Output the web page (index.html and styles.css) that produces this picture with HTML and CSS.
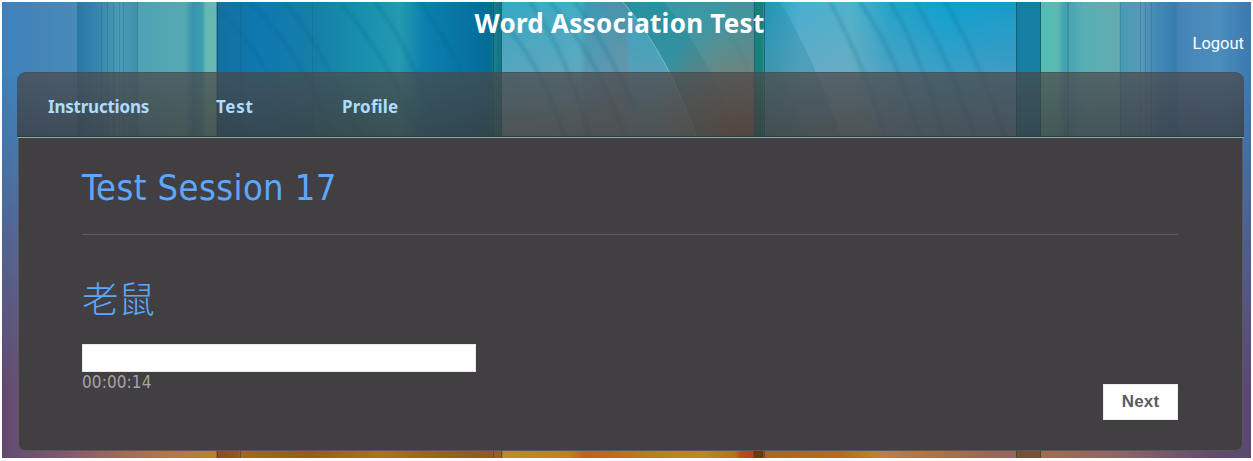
FILE: index.html
```html
<!DOCTYPE html>
<html lang="en">
<head>
<meta charset="utf-8">
<title>Word Association Test</title>
<link rel="stylesheet" href="styles.css">
</head>
<body>
<div class="page">
  <svg class="backdrop" viewBox="2 2 1249 456" preserveAspectRatio="none" aria-hidden="true">
    <defs>
      <linearGradient id="sky" gradientUnits="userSpaceOnUse" x1="0" x2="1000" y1="0" y2="0">
        <stop offset=".002" stop-color="#3c82bd"/><stop offset=".04" stop-color="#4585b9"/><stop offset=".077" stop-color="#478bb8"/>
        <stop offset=".077" stop-color="#2877a8"/><stop offset=".098" stop-color="#3786ae"/><stop offset=".12" stop-color="#489bb4"/>
        <stop offset=".137" stop-color="#3e91ac"/><stop offset=".139" stop-color="#4ca3b4"/><stop offset=".185" stop-color="#55a9b2"/>
        <stop offset=".193" stop-color="#3594ac"/><stop offset=".202" stop-color="#3c9eae"/><stop offset=".206" stop-color="#67b8b2"/>
        <stop offset=".216" stop-color="#67b8b2"/><stop offset=".217" stop-color="#1470a1"/><stop offset=".26" stop-color="#0e78b2"/>
        <stop offset=".31" stop-color="#147ea8"/><stop offset=".36" stop-color="#178fad"/><stop offset=".4" stop-color="#2499b0"/>
        <stop offset=".425" stop-color="#0b7fae"/><stop offset=".48" stop-color="#046f9e"/><stop offset=".492" stop-color="#056c91"/>
        <stop offset=".493" stop-color="#147f91"/><stop offset=".501" stop-color="#127483"/><stop offset=".502" stop-color="#35a8c4"/>
        <stop offset=".58" stop-color="#42adc3"/><stop offset=".586" stop-color="#3a9ab3"/><stop offset=".626" stop-color="#4993aa"/>
        <stop offset=".63" stop-color="#38a1bd"/><stop offset=".67" stop-color="#36a3bc"/><stop offset=".72" stop-color="#4a9caf"/>
        <stop offset=".753" stop-color="#638c94"/><stop offset=".754" stop-color="#177f7f"/><stop offset=".763" stop-color="#198276"/>
        <stop offset=".764" stop-color="#209ec1"/><stop offset=".8" stop-color="#49afd0"/><stop offset=".85" stop-color="#4eb2cb"/><stop offset=".89" stop-color="#24a3ca"/>
        <stop offset=".95" stop-color="#0ea0d0"/><stop offset="1" stop-color="#169ccb"/>
      </linearGradient>
      <linearGradient id="skyRight" x1="0" x2="1" y1="0" y2="0">
        <stop offset="0" stop-color="#50beb4"/><stop offset=".08" stop-color="#5cb9b1"/><stop offset=".11" stop-color="#40a2b3"/>
        <stop offset=".2" stop-color="#57afb4"/><stop offset=".37" stop-color="#63acb1"/><stop offset=".38" stop-color="#489bb2"/>
        <stop offset=".48" stop-color="#5698b8"/><stop offset=".56" stop-color="#4088b5"/><stop offset=".64" stop-color="#367eb2"/>
        <stop offset=".66" stop-color="#4785b8"/><stop offset=".85" stop-color="#4b8dbd"/><stop offset="1" stop-color="#3b79b2"/>
      </linearGradient>
      <linearGradient id="ground" gradientUnits="userSpaceOnUse" x1="0" x2="1000" y1="0" y2="0">
        <stop offset=".002" stop-color="#614a70"/><stop offset=".07" stop-color="#825b6c"/><stop offset=".13" stop-color="#a46d57"/>
        <stop offset=".18" stop-color="#b87941"/><stop offset=".216" stop-color="#bd8027"/><stop offset=".217" stop-color="#8b4f17"/>
        <stop offset=".239" stop-color="#93581a"/><stop offset=".24" stop-color="#ab651a"/><stop offset=".31" stop-color="#985c12"/>
        <stop offset=".38" stop-color="#aa7418"/><stop offset=".44" stop-color="#966514"/><stop offset=".492" stop-color="#8f5b19"/>
        <stop offset=".493" stop-color="#a65819"/><stop offset=".502" stop-color="#a45c1a"/><stop offset=".503" stop-color="#c18a22"/>
        <stop offset=".57" stop-color="#c57d1b"/><stop offset=".585" stop-color="#c5601a"/><stop offset=".62" stop-color="#c46c18"/>
        <stop offset=".65" stop-color="#bd7d1a"/><stop offset=".7" stop-color="#bd8820"/><stop offset=".735" stop-color="#bd701a"/>
        <stop offset=".74" stop-color="#b94c1a"/><stop offset=".753" stop-color="#b84419"/><stop offset=".754" stop-color="#6b390a"/>
        <stop offset=".763" stop-color="#6b390a"/><stop offset=".764" stop-color="#b0641e"/><stop offset=".84" stop-color="#b96a1a"/>
        <stop offset=".87" stop-color="#bf8022"/><stop offset=".88" stop-color="#c67b3d"/><stop offset=".95" stop-color="#a87048"/>
        <stop offset="1" stop-color="#94665e"/>
      </linearGradient>
      <linearGradient id="groundRight" x1="0" x2="1" y1="0" y2="0">
        <stop offset="0" stop-color="#a16e50"/><stop offset=".4" stop-color="#8a6468"/><stop offset=".8" stop-color="#644c6c"/>
        <stop offset="1" stop-color="#5b4871"/>
      </linearGradient>
      <linearGradient id="fall" x1="0" x2="0" y1="0" y2="1">
        <stop offset=".16" stop-color="#fff" stop-opacity="0"/><stop offset=".3" stop-color="#fff" stop-opacity=".2"/>
        <stop offset=".55" stop-color="#fff" stop-opacity=".6"/><stop offset=".85" stop-color="#fff"/>
      </linearGradient>
      <radialGradient id="warm" cx=".8" cy="1" r=".9">
        <stop offset="0" stop-color="#b06040" stop-opacity=".75"/><stop offset="1" stop-color="#b06848" stop-opacity="0"/>
      </radialGradient>
      <linearGradient id="pale" x1="0" x2="0" y1="0" y2="1">
        <stop offset="0" stop-color="#a89cae" stop-opacity="0"/><stop offset="1" stop-color="#a89cae" stop-opacity=".55"/>
      </linearGradient>
      <mask id="fade"><rect x="2" y="2" width="1249" height="456" fill="url(#fall)"/></mask>
      <filter id="soft"><feGaussianBlur stdDeviation="1.5"/></filter>
    </defs>
    <rect x="2" y="2" width="1014" height="456" fill="url(#sky)"/>
    <rect x="1016" y="2" width="26" height="456" fill="#147fa3"/>
    <rect x="1041" y="2" width="210" height="456" fill="url(#skyRight)"/>
    <rect x="502" y="2" width="252" height="136" fill="url(#pale)"/>
    <rect x="765" y="2" width="251" height="136" fill="url(#pale)"/>
    <g fill="none" stroke="#075f88" stroke-opacity=".2" stroke-width="4" filter="url(#soft)">
      <path d="M218 10Q260 45 300 138M250 2Q300 50 335 138M285 2Q325 50 360 138M340 2Q390 60 420 138M375 2Q410 45 440 138M420 2Q455 50 490 138"/>
      <path d="M503 24Q540 60 565 138M530 2Q568 55 590 138M550 2Q600 60 625 138M575 2Q610 50 635 110M725 25Q750 65 763 120"/>
      <path d="M830 2Q865 65 885 138M860 2Q900 60 920 138M890 2Q920 50 944 138M915 2Q950 60 975 138M945 2Q975 50 1005 138"/>
    </g>
    <path d="M623 2Q668 54 697 138H755V2Z" fill="#177f86" fill-opacity=".5"/>
    <path d="M664 2Q705 50 742 138H755V2Z" fill="#54a9b2" fill-opacity=".35"/>
    <path d="M623 2Q668 54 697 138" fill="none" stroke="#91ced2" stroke-opacity=".65"/>
    <path d="M764 40Q790 84 804 138H764Z" fill="#338da0" fill-opacity=".5"/>
    <path d="M780 2Q810 50 842 138H804Q790 84 764 40V2Z" fill="#20839c" fill-opacity=".28"/>
    <rect x="660" y="2" width="94" height="136" fill="url(#warm)"/>
    <g fill="#235773" fill-opacity=".28">
      <path d="M101 2h1v136h-1zM107 2h1v136h-1zM113 2h1v136h-1zM119 2h1v136h-1zM123 2h1v136h-1zM137 2h1v136h-1zM240 2h1v136h-1zM312 2h1v136h-1z"/>
      <path d="M1120 2h1v136h-1zM1140 2h1v136h-1zM1145 2h1v136h-1zM1151 2h1v136h-1zM1067 2h2v136h-2z"/>
    </g>
    <g mask="url(#fade)">
      <rect x="2" y="2" width="1014" height="456" fill="url(#ground)"/>
      <rect x="1016" y="2" width="26" height="456" fill="#745238"/>
      <rect x="1041" y="2" width="210" height="456" fill="url(#groundRight)"/>
    </g>
    <path d="M217 2h1v456h-1zM240 440h1v18h-1zM493 2h1v456h-1zM501 2h1v456h-1zM754 2h1v456h-1zM764 2h1v456h-1zM1016 2h1v456h-1zM1040 2h1v456h-1z" fill="#143f45" fill-opacity=".5"/>
  </svg>

  <header class="header">
    <h1 class="title">Word Association Test</h1>
    <a class="logout">Logout</a>
  </header>
  <nav class="nav">
    <a class="nav-item instructions">Instructions</a>
    <a class="nav-item test">Test</a>
    <a class="nav-item profile">Profile</a>
  </nav>
  <main class="panel">
    <h2 class="session">Test Session 17</h2>
    <h2 class="word" lang="zh">老鼠</h2>
    <input class="answer" type="text" aria-label="Answer">
    <div class="footer">
      <span class="timer">00:00:14</span>
      <button class="next" type="button">Next</button>
    </div>
  </main>
</div>
</body>
</html>
```
FILE: styles.css
```css
* { box-sizing: border-box; }
body { margin: 0; background: #fff; }
.page {
  position: relative;
  width: 1249px;
  height: 456px;
  margin: 2px;
  overflow: hidden;
  font-family: "DejaVu Sans Condensed", "DejaVu Sans", sans-serif;
  font-stretch: condensed;
}
.backdrop { position: absolute; inset: 0; width: 100%; height: 100%; z-index: -1; }
.header { display: grid; grid-template-columns: 1fr auto 1fr; height: 70px; padding: 0 7px 0 0; color: #fff; }
.title { grid-column: 2; margin: 0; padding-right: 7px; font: bold 26px/42px "Noto Sans", sans-serif; letter-spacing: .27px; }
.logout { justify-self: end; padding-top: 31px; font: 16.5px/22px Roboto, sans-serif; }
.nav {
  display: flex;
  width: 1227px;
  height: 66px;
  margin-left: 15px;
  padding-left: 31px;
  border-bottom: 1px solid #91a9a8;
  border-radius: 9px 9px 0 0;
  background: linear-gradient(rgba(76,70,70,.7), rgba(55,56,58,.72));
  box-shadow: inset 0 -1px #253c41, inset 0 1px rgba(65,75,80,.5);
}
.nav-item { color: #aedcff; font: bold 17px/69px "Noto Sans", sans-serif; }
.instructions { width: 168px; letter-spacing: -.22px; }
.test { width: 126px; letter-spacing: .7px; }
.profile { letter-spacing: .15px; }
.panel {
  display: flex;
  flex-direction: column;
  align-items: flex-start;
  width: 1225px;
  height: 313px;
  margin-left: 16px;
  padding: 0 64px 0 63px;
  border: solid #58595d;
  border-width: 0 1px 1px;
  border-radius: 0 0 7px 7px;
  background: #423f43;
}
.session {
  align-self: stretch;
  height: 97px;
  margin: 0;
  border-bottom: 1px solid #5d5b60;
  color: #5ca8ff;
  font-size: 36px;
  font-weight: 400;
  letter-spacing: .42px;
  line-height: 99px;
}
.word { margin: 37px 0 0; color: #5ca8ff; font: 200 36.5px/52px "Noto Sans CJK SC", sans-serif; }
.answer { width: 394px; height: 28px; margin-top: 20px; padding: 0 6px; border: 1px solid #e9e9e9; background: #fff; }
.footer { display: flex; justify-content: space-between; align-self: stretch; }
.timer { color: #a5a3a5; font-size: 17px; letter-spacing: .1px; line-height: 21px; }
.next { width: 75px; height: 36px; margin-top: 12px; padding: 0; border: 1px solid #eee; background: #fff; color: #5c5c60; font: bold 17px/32px "Liberation Sans", sans-serif; letter-spacing: .2px; }
```
